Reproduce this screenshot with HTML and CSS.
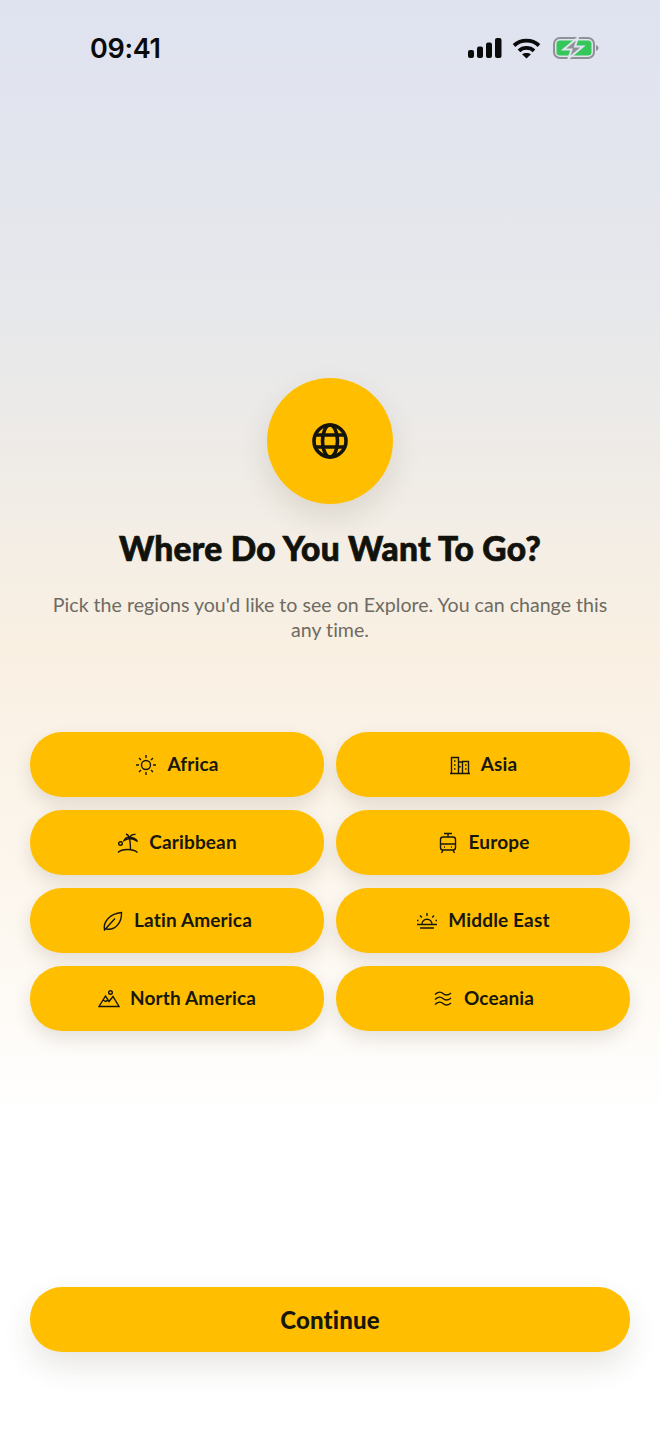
FILE: index.html
```html
<!DOCTYPE html>
<html lang="en">
<head>
  <meta charset="UTF-8" />
  <meta name="viewport" content="width=device-width, initial-scale=1.0"/>
  <title>Where Do You Want To Go?</title>
  <link rel="stylesheet" href="styles.css">
</head>
<body>
  <div class="screen">
    <div class="status-bar">
      <span class="time">09:41</span>
      <div class="status-icons">
        <svg width="34" height="20" viewBox="0 0 34 20" fill="#0b0b0b"><rect x="0" y="12" width="6" height="8" rx="2"/><rect x="9" y="8.500" width="6" height="11.500" rx="2"/><rect x="18" y="4.500" width="6" height="15.500" rx="2"/><rect x="27" y="0" width="6.500" height="20" rx="2"/></svg>
        <svg width="29" height="21" viewBox="0 0 29 21" fill="none" stroke="#0b0b0b" stroke-width="3.800"><path d="M2 7.500C9 1 20 1 27 7.500"/><path d="M7 12.800C11 9 18 9 22 12.800"/><path d="M14.500 20.500L10 16.300C12.500 14.500 16.500 14.500 19 16.300Z" fill="#0b0b0b" stroke="none"/></svg>
        <svg class="battery" width="46" height="22" viewBox="0 0 46 22"><rect x="1" y="1" width="40" height="20" rx="6" fill="none" stroke="#8f9294" stroke-width="2"/><rect x="3.500" y="3.500" width="35" height="15" rx="3.500" fill="#35c759"/><path d="M43 8v6c1.500-.5 2.500-1.600 2.500-3S44.500 8.500 43 8z" fill="#8f9294"/><path d="M25 0.500L10.500 12.500H18.500L15.500 21.500L30 9.500H22Z" fill="#8f9294" stroke="#dfe3f0" stroke-width="2"/></svg>
      </div>
    </div>

    <div class="intro">
      <div class="globe-badge">
        <svg width="38" height="38" viewBox="0 0 38 38" fill="none" stroke="#14140c" stroke-width="3.600"><circle cx="19" cy="19" r="16"/><ellipse cx="19" cy="19" rx="7.500" ry="16"/><path d="M4.500 13H33.500M4.500 25H33.500"/></svg>
      </div>
      <h1>Where Do You Want To Go?</h1>
      <p>Pick the regions you'd like to see on Explore. You can change this any time.</p>
    </div>

    <div class="region-grid">
      <button class="pill">
        <svg class="icon" viewBox="0 0 22 22"><circle cx="11" cy="11" r="4.500"/><path d="M11 1v3M11 18v3M1 11h3M18 11h3M4 4l2 2M16 16l2 2M4 18l2-2M16 6l2-2"/></svg>
        <span>Africa</span>
      </button>
      <button class="pill">
        <svg class="icon" viewBox="0 0 22 22"><path d="M1 19.500h20M2.500 19.500V3.500h7v16M9.500 8h4M13.500 19.500V7.500h6v12M5 7h1.500M5 11h1.500M5 15h1.500M11 12v1.500M16 11h1.500M16 15h1.500"/></svg>
        <span>Asia</span>
      </button>
      <button class="pill">
        <svg class="icon" viewBox="0 0 22 22"><circle cx="3.500" cy="11.500" r="1.800"/><path d="M1 20.500C5 16.500 16 16.500 20.500 20.500M13.500 17C13.500 12 13 9 12.500 6.500M12.500 6.500C10 4.500 8 6 7 8.500C9 7.500 11 7 12.500 6.500ZM12.500 6.500C13 3.500 16 2 18.500 2.500M12.500 6.500C15 5 19 6 20.500 9.500C18 7.500 15 6.500 12.500 6.500ZM12.500 6.500C12 4 10.500 2.500 9 2"/></svg>
        <span>Caribbean</span>
      </button>
      <button class="pill">
        <svg class="icon" viewBox="0 0 22 22"><rect x="3.500" y="5" width="15" height="13" rx="2.500"/><path d="M7 1.500h8M11 1.500V5M3.500 12h15M6 18l-1.500 3M16 18l1.500 3M7 15h1M14 15h1"/></svg>
        <span>Europe</span>
      </button>
      <button class="pill">
        <svg class="icon" viewBox="0 0 22 22"><path d="M2.500 19.500C1 12 8 3.500 19.500 2.500C20 13 13 20.500 4.500 19C3 18.800 2.500 19.500 2.500 19.500ZM2 20.500L13 8.500"/></svg>
        <span>Latin America</span>
      </button>
      <button class="pill">
        <svg class="icon" viewBox="0 0 22 22"><path d="M1 14.500h20M4 18h14M6 14.500C6 7.500 16 7.500 16 14.500M11 3v3M4 5.500l1.800 2M18 5.500l-1.800 2M1 10.500h1.500M19.500 10.500H21"/></svg>
        <span>Middle East</span>
      </button>
      <button class="pill">
        <svg class="icon" viewBox="0 0 22 22"><circle cx="12.500" cy="4.500" r="1.800"/><path d="M1 18.500L7.500 8l3.500 5.500L15 8.500l6 10ZM5 12l2.500 1.500 2-1"/></svg>
        <span>North America</span>
      </button>
      <button class="pill">
        <svg class="icon" viewBox="0 0 22 22"><path d="M3 6.500C6 3.500 9 3.500 11 5.500S16 7.500 19 5M3 11.500C6 8.500 9 8.500 11 10.500S16 12.500 19 10M3 16.500C6 13.500 9 13.500 11 15.500S16 17.500 19 15"/></svg>
        <span>Oceania</span>
      </button>
    </div>

    <button class="pill continue"><span>Continue</span></button>
  </div>
</body>
</html>
```
FILE: styles.css
```css
html, body {
  margin: 0;
  padding: 0;
}

body {
  font-family: Lato, "Open Sans", sans-serif;
  font-variant-ligatures: none;
  color: #17170f;
}

.screen {
  height: 1434px;
  box-sizing: border-box;
  padding: 0 30px;
  overflow: hidden;
  background: linear-gradient(180deg, #dfe3f0 0%, #e7e8eb 22%, #f9f0e2 45%, #fdf8f1 66%, #ffffff 78%, #ffffff 100%);
}

.status-bar {
  display: flex;
  align-items: center;
  justify-content: space-between;
  height: 22px;
  padding: 37px 31px 0 60px;
}

.time {
  font-family: Inter, sans-serif;
  font-size: 27px;
  font-weight: 600;
  letter-spacing: -0.3px;
  color: #0b0b0b;
}

.status-icons {
  display: flex;
  align-items: center;
  gap: 10px;
}

.battery {
  margin-left: 2px;
}

.intro {
  display: flex;
  flex-direction: column;
  align-items: center;
  text-align: center;
  padding-top: 319px;
}

.globe-badge {
  display: flex;
  align-items: center;
  justify-content: center;
  width: 126px;
  height: 126px;
  border-radius: 50%;
  background: #ffbf00;
  box-shadow: 0 12px 30px rgba(60, 50, 20, 0.12);
}

h1 {
  margin: 24px 0 0;
  font-size: 33.5px;
  line-height: 40px;
  font-weight: 900;
  letter-spacing: 0.25px;
  -webkit-text-stroke: 0.7px #12120c;
  color: #12120c;
}

p {
  max-width: 570px;
  margin: 24px 0 0;
  font-size: 19.6px;
  line-height: 25px;
  color: #6e6b62;
}

.region-grid {
  display: grid;
  grid-template-columns: 1fr 1fr;
  gap: 13px 12px;
  margin-top: 90px;
}

.pill {
  display: flex;
  align-items: center;
  justify-content: center;
  gap: 10px;
  width: 100%;
  height: 65px;
  padding: 0;
  border: none;
  border-radius: 32px;
  background: #ffbf00;
  box-shadow: 0 8px 18px rgba(60, 50, 20, 0.13);
  font-family: inherit;
  font-variant-ligatures: none;
  font-size: 19px;
  font-weight: 700;
  letter-spacing: 0.15px;
  color: #17170f;
}

.pill span {
  margin-bottom: 2px;
}

.icon {
  width: 22px;
  height: 22px;
  fill: none;
  stroke: #17170f;
  stroke-width: 1.400;
}

.continue {
  margin-top: 256px;
  font-size: 24px;
  font-weight: 900;
  box-shadow: 0 14px 30px rgba(60, 50, 20, 0.12);
}

.continue span {
  margin-bottom: 0;
}
```
